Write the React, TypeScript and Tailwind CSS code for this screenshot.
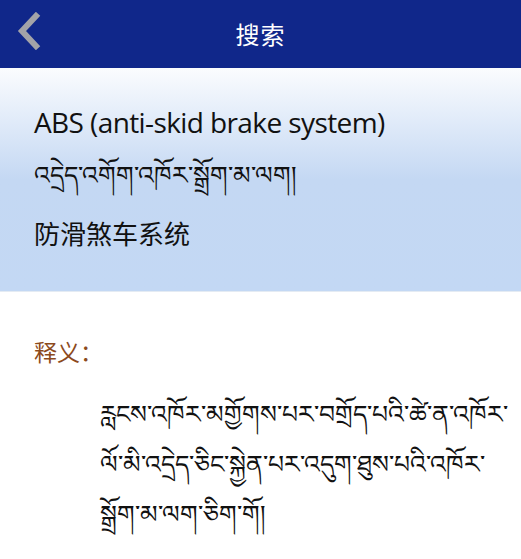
const BackIcon = () => (
  <svg width="26" height="38" viewBox="0 0 26 38" fill="none">
    <path d="M20 4 L6 19 L20 34" stroke="#a3a3a8" strokeWidth="6" strokeLinecap="square" strokeLinejoin="miter" />
  </svg>
);

const definition = [
  "རླངས་འཁོར་མགྱོགས་པར་བགྲོད་པའི་ཚེ་ན་འཁོར་",
  "ལོ་མི་འདྲེད་ཅིང་སྐྱེན་པར་འདུག་ཐུས་པའི་འཁོར་",
  "སྒྲོག་མ་ལག་ཅིག་གོ།",
];

export default function App() {
  return (
    <div className="w-[521px] h-[559px] bg-white overflow-hidden font-['Open_Sans','Noto_Sans_CJK_SC',sans-serif]">
      <div className="relative h-[68px] bg-[#10278a] flex items-center justify-center">
        <button className="absolute left-[16px] top-[12px]">
          <BackIcon />
        </button>
        <span className="text-white text-[24px] tracking-[1px] font-['Noto_Sans_CJK_SC',sans-serif]">搜索</span>
      </div>

      <div className="h-[224px] bg-gradient-to-b from-[#fbfcfe] via-[#c4d8f3] via-50% to-[#c3d8f4] border-b border-[#e4ebf3] px-[34px] pt-[35px]">
        <p className="text-[28px] leading-[38px] font-medium text-[#111] tracking-[-0.6px] font-['Open_Sans',sans-serif]">
          ABS (anti-skid brake system)
        </p>
        <p className="text-[25px] leading-[40px] text-[#111] mt-[15px] font-['Noto_Sans_Tibetan','DejaVu_Sans',sans-serif]">
          འདྲེད་འགོག་འཁོར་སྒྲོག་མ་ལག།
        </p>
        <p className="text-[26px] leading-[40px] text-[#111] mt-[17px] font-['Noto_Sans_CJK_SC',sans-serif]">
          防滑煞车系统
        </p>
      </div>

      <div className="px-[34px] pt-[42px]">
        <p className="text-[23px] leading-[34px] text-[#8c4a1c] font-['Noto_Sans_CJK_SC',sans-serif]">
          释义：
        </p>
        <div className="pl-[66px] mt-[22px] flex flex-col text-[25px] leading-[50px] text-[#111] font-['Noto_Sans_Tibetan','DejaVu_Sans',sans-serif]">
          {definition.map((line, idx) => (
            <span key={idx} className="whitespace-nowrap">{line}</span>
          ))}
        </div>
      </div>
    </div>
  );
}
